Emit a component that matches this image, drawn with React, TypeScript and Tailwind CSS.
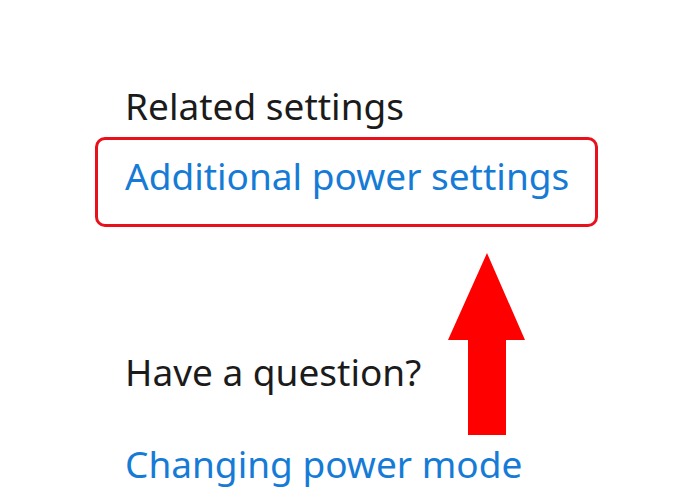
import React from "react";

export default function App() {
  return (
    <div className="relative w-[700px] h-[500px] bg-white overflow-hidden" style={{ fontFamily: '"Noto Sans", "Open Sans", sans-serif' }}>
      <div className="flex flex-col items-start pl-[95px] pt-[87px]">
        <div className="pl-[30px] text-[37px] leading-[37px] text-[#1b1b1b]">Related settings</div>
        <div className="mt-[13px] w-[503px] h-[90px] border-[3px] border-[#e8101a] rounded-[10px] pl-[27px] pt-[17px]">
          <span className="text-[37px] leading-[37px] text-[#157bd6] whitespace-nowrap">Additional power settings</span>
        </div>
        <div className="mt-[126px] pl-[30px] text-[37px] leading-[37px] text-[#1b1b1b]">Have a question?</div>
        <div className="mt-[55px] pl-[30px] text-[37px] leading-[37px] text-[#157bd6] whitespace-nowrap">Changing power mode</div>
      </div>
      <svg className="absolute left-[448px] top-[253px]" width="77" height="182" viewBox="0 0 77 182">
        <polygon points="39,0 77,87 58,87 58,182 20,182 20,87 0,87" fill="#ff0000" />
      </svg>
    </div>
  );
}
